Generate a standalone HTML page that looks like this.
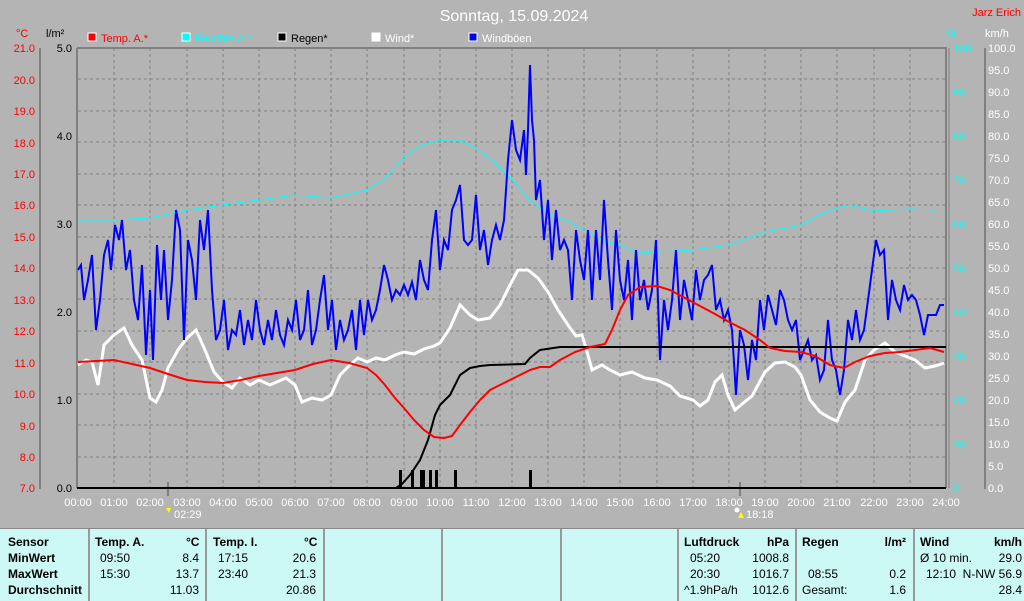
<!DOCTYPE html>
<html><head><meta charset="utf-8"><style>
body{margin:0;width:1024px;height:600px;overflow:hidden;background:#b4b4b4;font-family:"Liberation Sans",sans-serif}
svg{position:absolute;left:0;top:0}
.tb{position:absolute;left:0;top:528px;width:1024px;height:72px;background:#ccf8f5;border-top:1px solid #888}
.c{position:absolute;top:0;height:72px;border-left:2px solid #999}
.t{position:absolute;font-size:12px;color:#000;white-space:nowrap}
.b{font-weight:bold}
</style></head><body>
<svg width="1024" height="528" font-family="Liberation Sans, sans-serif" font-size="11">
<text x="514" y="21" fill="#fff" font-size="16" text-anchor="middle">Sonntag, 15.09.2024</text>
<text x="1021" y="16" fill="#f00" font-size="11" text-anchor="end">Jarz Erich</text>
<text x="16" y="37" fill="#f00">°C</text>
<text x="46" y="37" fill="#000">l/m²</text>
<text x="946" y="37" fill="#0ff">%</text>
<text x="985" y="37" fill="#fff">km/h</text>
<g stroke="#fff" stroke-width="1"><rect x="88" y="33" width="8" height="8" fill="#f00"/><rect x="182" y="33" width="8" height="8" fill="#0ff"/><rect x="278" y="33" width="8" height="8" fill="#000"/><rect x="372" y="33" width="8" height="8" fill="#fff"/><rect x="469" y="33" width="8" height="8" fill="#00f"/></g>
<text x="101" y="42" fill="#f00">Temp. A.*</text>
<text x="195" y="42" fill="#0ff">Feuchte A.*</text>
<text x="291" y="42" fill="#000">Regen*</text>
<text x="385" y="42" fill="#fff">Wind*</text>
<text x="482" y="42" fill="#fff">Windböen</text>
<!-- grid -->
<g stroke="#808080" stroke-dasharray="3,3" stroke-width="1">
<line x1="114" y1="48" x2="114" y2="488"/><line x1="150" y1="48" x2="150" y2="488"/><line x1="187" y1="48" x2="187" y2="488"/><line x1="223" y1="48" x2="223" y2="488"/><line x1="259" y1="48" x2="259" y2="488"/><line x1="295" y1="48" x2="295" y2="488"/><line x1="331" y1="48" x2="331" y2="488"/><line x1="367" y1="48" x2="367" y2="488"/><line x1="404" y1="48" x2="404" y2="488"/><line x1="440" y1="48" x2="440" y2="488"/><line x1="476" y1="48" x2="476" y2="488"/><line x1="512" y1="48" x2="512" y2="488"/><line x1="548" y1="48" x2="548" y2="488"/><line x1="584" y1="48" x2="584" y2="488"/><line x1="620" y1="48" x2="620" y2="488"/><line x1="657" y1="48" x2="657" y2="488"/><line x1="693" y1="48" x2="693" y2="488"/><line x1="729" y1="48" x2="729" y2="488"/><line x1="765" y1="48" x2="765" y2="488"/><line x1="801" y1="48" x2="801" y2="488"/><line x1="837" y1="48" x2="837" y2="488"/><line x1="874" y1="48" x2="874" y2="488"/><line x1="910" y1="48" x2="910" y2="488"/>
<line x1="78" y1="79" x2="946" y2="79"/><line x1="78" y1="111" x2="946" y2="111"/><line x1="78" y1="142" x2="946" y2="142"/><line x1="78" y1="174" x2="946" y2="174"/><line x1="78" y1="205" x2="946" y2="205"/><line x1="78" y1="237" x2="946" y2="237"/><line x1="78" y1="268" x2="946" y2="268"/><line x1="78" y1="299" x2="946" y2="299"/><line x1="78" y1="331" x2="946" y2="331"/><line x1="78" y1="362" x2="946" y2="362"/><line x1="78" y1="394" x2="946" y2="394"/><line x1="78" y1="425" x2="946" y2="425"/><line x1="78" y1="457" x2="946" y2="457"/>
</g>
<g stroke="#808080" stroke-width="2" fill="none"><line x1="77" y1="48" x2="947" y2="48"/><line x1="77" y1="48" x2="77" y2="488"/><line x1="946" y1="48" x2="946" y2="488"/><line x1="40" y1="48" x2="40" y2="489"/><line x1="985" y1="48" x2="985" y2="489"/><line x1="168" y1="482" x2="168" y2="496"/><line x1="740" y1="482" x2="740" y2="496"/></g>
<line x1="949" y1="48" x2="949" y2="488" stroke="#808080"/>
<line x1="77" y1="488" x2="946" y2="488" stroke="#000" stroke-width="2"/>
<g fill="#f00" text-anchor="end">
<text x="35" y="52">21.0</text><text x="35" y="84">20.0</text><text x="35" y="115">19.0</text><text x="35" y="147">18.0</text><text x="35" y="178">17.0</text><text x="35" y="209">16.0</text><text x="35" y="241">15.0</text><text x="35" y="272">14.0</text><text x="35" y="304">13.0</text><text x="35" y="335">12.0</text><text x="35" y="367">11.0</text><text x="35" y="398">10.0</text><text x="35" y="430">9.0</text><text x="35" y="461">8.0</text><text x="35" y="492">7.0</text>
</g>
<g fill="#000" text-anchor="end"><text x="72" y="52">5.0</text><text x="72" y="140">4.0</text><text x="72" y="228">3.0</text><text x="72" y="316">2.0</text><text x="72" y="404">1.0</text><text x="72" y="492">0.0</text></g>
<g fill="#0ff"><text x="953" y="52">100</text><text x="953" y="96">90</text><text x="953" y="140">80</text><text x="953" y="184">70</text><text x="953" y="228">60</text><text x="953" y="272">50</text><text x="953" y="316">40</text><text x="953" y="360">30</text><text x="953" y="404">20</text><text x="953" y="448">10</text><text x="953" y="492">0</text></g>
<g fill="#fff"><text x="988" y="52">100.0</text><text x="988" y="74">95.0</text><text x="988" y="96">90.0</text><text x="988" y="118">85.0</text><text x="988" y="140">80.0</text><text x="988" y="162">75.0</text><text x="988" y="184">70.0</text><text x="988" y="206">65.0</text><text x="988" y="228">60.0</text><text x="988" y="250">55.0</text><text x="988" y="272">50.0</text><text x="988" y="294">45.0</text><text x="988" y="316">40.0</text><text x="988" y="338">35.0</text><text x="988" y="360">30.0</text><text x="988" y="382">25.0</text><text x="988" y="404">20.0</text><text x="988" y="426">15.0</text><text x="988" y="448">10.0</text><text x="988" y="470">5.0</text><text x="988" y="492">0.0</text></g>
<g fill="#fff" text-anchor="middle"><text x="78" y="506">00:00</text><text x="114" y="506">01:00</text><text x="150" y="506">02:00</text><text x="187" y="506">03:00</text><text x="223" y="506">04:00</text><text x="259" y="506">05:00</text><text x="295" y="506">06:00</text><text x="331" y="506">07:00</text><text x="367" y="506">08:00</text><text x="404" y="506">09:00</text><text x="440" y="506">10:00</text><text x="476" y="506">11:00</text><text x="512" y="506">12:00</text><text x="548" y="506">13:00</text><text x="584" y="506">14:00</text><text x="620" y="506">15:00</text><text x="657" y="506">16:00</text><text x="693" y="506">17:00</text><text x="729" y="506">18:00</text><text x="765" y="506">19:00</text><text x="801" y="506">20:00</text><text x="837" y="506">21:00</text><text x="874" y="506">22:00</text><text x="910" y="506">23:00</text><text x="946" y="506">24:00</text></g>
<text x="174" y="518" fill="#fff">02:29</text><path d="M166 508h5l-2 5z" fill="#ff0"/>
<text x="746" y="518" fill="#fff">18:18</text><path d="M741 512l3 6h-6z" fill="#ff0"/><circle cx="737" cy="510" r="2.5" fill="#fff"/>
<!-- rain bars -->
<g fill="#000"><rect x="399" y="470" width="3" height="18"/><rect x="411" y="470" width="3" height="18"/><rect x="420" y="470" width="5" height="18"/><rect x="429" y="470" width="3" height="18"/><rect x="435" y="470" width="3" height="18"/><rect x="454" y="470" width="3" height="18"/><rect x="529" y="470" width="3" height="18"/></g>
<polyline fill="none" stroke="#0ff" stroke-width="1" points="78,220 114,220 150,218 187,210 223,205 259,200 295,195 331,198 367,190 385,178 404,157 422,145 440,140 458,140 476,148 494,162 512,180 530,200 548,214 566,220 584,230 602,240 620,245 638,253 657,252 693,250 729,245 765,232 801,225 820,215 837,208 850,205 874,211 890,210 910,209 935,210"/>
<polyline fill="none" stroke="#fff" stroke-width="3" points="78,365 86,360 92,362 98,385 104,345 114,335 124,328 132,345 142,360 150,398 156,402 162,390 168,368 178,350 187,338 196,330 205,350 214,372 223,382 232,388 240,378 250,385 259,380 270,385 286,378 295,385 302,402 312,398 322,400 331,395 340,375 350,365 358,358 367,362 376,358 385,360 395,355 404,352 414,354 424,349 434,346 440,343 450,328 460,305 470,315 478,320 490,318 500,305 510,285 518,270 528,270 538,278 548,292 558,310 570,328 576,336 582,335 586,348 592,370 602,365 610,370 620,375 632,372 645,378 657,380 670,386 680,396 693,400 700,406 708,400 715,382 722,375 728,395 735,410 742,404 752,396 765,372 775,363 785,362 795,367 801,375 810,400 820,412 830,418 837,421 845,402 855,390 865,360 874,350 885,343 895,352 905,356 915,360 925,368 935,366 944,363"/>
<polyline fill="none" stroke="#00f" stroke-width="2" points="78,270 81,265 84,300 88,280 92,255 96,330 100,300 104,255 108,240 111,270 115,225 119,240 122,220 126,270 130,250 134,300 138,320 142,265 146,355 150,290 153,360 157,245 161,300 164,250 168,320 172,280 176,210 180,230 184,340 188,240 192,260 196,300 200,220 204,250 208,210 212,290 216,340 220,330 224,300 228,350 232,330 236,335 240,310 244,345 248,320 252,340 256,300 260,330 264,345 268,320 272,340 276,310 280,335 284,345 288,320 292,330 296,300 300,340 304,330 308,290 312,345 316,330 320,300 324,275 328,330 332,300 336,350 340,320 344,340 348,330 352,310 356,350 360,300 364,335 368,300 372,320 376,310 380,290 384,265 388,280 392,300 396,290 400,295 404,285 408,295 412,282 416,300 420,260 424,280 428,290 432,240 436,210 440,270 444,240 448,250 452,210 456,200 460,185 464,240 468,245 472,240 476,195 480,250 484,230 488,265 492,240 496,225 500,240 504,220 508,160 512,120 516,150 520,160 524,130 526,175 528,130 530,65 532,120 534,140 536,200 540,180 544,240 548,200 552,260 556,210 560,250 564,240 568,250 572,300 576,230 580,260 584,280 588,230 592,300 596,230 600,280 604,200 608,260 612,310 616,230 620,280 624,300 628,260 632,320 636,250 640,300 644,280 648,310 652,290 656,240 660,360 664,300 668,330 672,300 676,250 680,320 684,280 688,300 692,320 696,270 700,300 704,280 708,275 712,265 716,310 720,300 724,320 728,310 732,330 736,395 740,330 744,345 748,380 752,340 756,360 760,300 764,330 768,295 772,310 776,325 780,290 784,300 788,320 792,330 796,320 800,360 804,350 808,340 812,360 816,355 820,380 824,370 828,320 832,360 836,370 840,395 844,370 848,320 852,340 856,310 860,340 864,330 868,300 872,270 876,240 880,255 884,250 888,320 892,280 896,300 900,310 904,285 908,300 912,295 916,300 920,315 924,335 928,315 932,315 936,315 940,305 944,305"/>
<polyline fill="none" stroke="#000" stroke-width="2" points="78,488 396,488 402,484 410,475 420,460 428,440 435,415 440,405 450,395 460,375 470,368 480,366 490,365 525,364 530,358 540,350 560,347 946,347"/>
<polyline fill="none" stroke="#f00" stroke-width="2" points="78,362 96,361 114,360 132,364 150,368 168,374 187,380 205,382 223,383 241,380 259,376 277,373 295,370 313,364 331,360 349,363 367,368 376,375 385,385 395,398 404,408 414,420 424,430 434,437 444,438 452,436 460,425 470,412 480,400 490,390 500,385 510,380 520,375 530,370 540,367 550,367 560,360 575,352 590,347 605,344 612,330 620,310 628,295 640,287 657,286 670,290 685,298 700,306 715,314 729,322 745,330 760,340 770,348 785,351 801,352 815,356 830,365 844,368 855,362 870,356 885,353 900,352 915,350 930,348 944,352"/>
</svg>
<div class="tb">
<div class="c" style="left:88px"></div><div class="c" style="left:205px"></div><div class="c" style="left:323px"></div><div class="c" style="left:441px"></div><div class="c" style="left:560px"></div><div class="c" style="left:677px"></div><div class="c" style="left:795px"></div><div class="c" style="left:913px"></div>
<div class="t b" style="left:8px;top:6px">Sensor</div><div class="t b" style="left:8px;top:22px">MinWert</div><div class="t b" style="left:8px;top:38px">MaxWert</div><div class="t b" style="left:8px;top:54px">Durchschnitt</div>
<div class="t b" style="left:95px;top:6px">Temp. A.</div><div class="t b" style="left:186px;top:6px">°C</div>
<div class="t" style="left:100px;top:22px">09:50</div><div class="t" style="right:825px;top:22px">8.4</div>
<div class="t" style="left:100px;top:38px">15:30</div><div class="t" style="right:825px;top:38px">13.7</div>
<div class="t" style="right:825px;top:54px">11.03</div>
<div class="t b" style="left:213px;top:6px">Temp. I.</div><div class="t b" style="left:304px;top:6px">°C</div>
<div class="t" style="left:218px;top:22px">17:15</div><div class="t" style="right:708px;top:22px">20.6</div>
<div class="t" style="left:218px;top:38px">23:40</div><div class="t" style="right:708px;top:38px">21.3</div>
<div class="t" style="right:708px;top:54px">20.86</div>
<div class="t b" style="left:684px;top:6px">Luftdruck</div><div class="t b" style="right:235px;top:6px">hPa</div>
<div class="t" style="left:690px;top:22px">05:20</div><div class="t" style="right:235px;top:22px">1008.8</div>
<div class="t" style="left:690px;top:38px">20:30</div><div class="t" style="right:235px;top:38px">1016.7</div>
<div class="t" style="left:684px;top:54px">^1.9hPa/h</div><div class="t" style="right:235px;top:54px">1012.6</div>
<div class="t b" style="left:802px;top:6px">Regen</div><div class="t b" style="right:118px;top:6px">l/m²</div>
<div class="t" style="left:808px;top:38px">08:55</div><div class="t" style="right:118px;top:38px">0.2</div>
<div class="t" style="left:802px;top:54px">Gesamt:</div><div class="t" style="right:118px;top:54px">1.6</div>
<div class="t b" style="left:920px;top:6px">Wind</div><div class="t b" style="right:2px;top:6px">km/h</div>
<div class="t" style="left:920px;top:22px">Ø 10 min.</div><div class="t" style="right:2px;top:22px">29.0</div>
<div class="t" style="left:926px;top:38px">12:10</div><div class="t" style="right:2px;top:38px">N-NW 56.9</div>
<div class="t" style="right:2px;top:54px">28.4</div>
</div>
</body></html>
